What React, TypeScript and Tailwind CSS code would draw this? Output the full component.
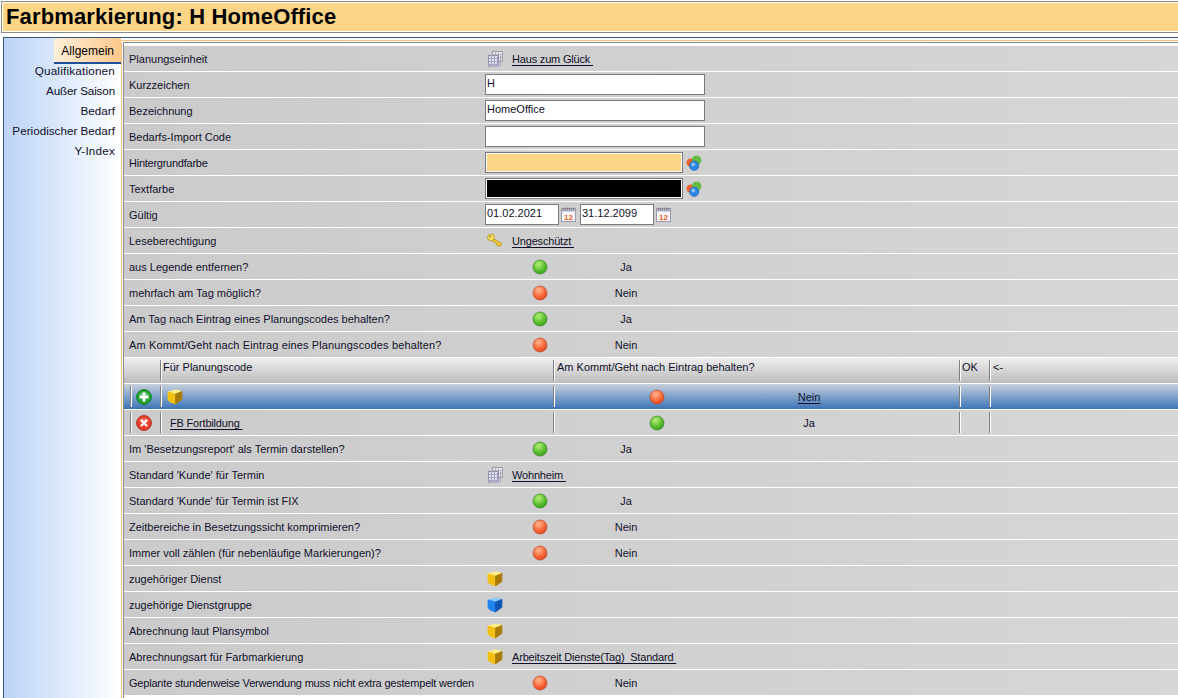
import React from 'react';

type Opt = 'Ja' | 'Nein';

function Ball({ color }: { color: 'green' | 'red' }) {
  const id = color === 'green' ? 'ball-green' : 'ball-red';
  const stops = color === 'green' ? ['#b8ee7a', '#5cc030', '#2f9418'] : ['#ffb890', '#fa6a3c', '#d83a18'];
  return (
    <svg width="16" height="16" viewBox="0 0 16 16" className="shrink-0">
      <defs>
        <radialGradient id={id} cx="0.4" cy="0.3" r="0.8">
          <stop offset="0" stopColor={stops[0]} />
          <stop offset="0.55" stopColor={stops[1]} />
          <stop offset="1" stopColor={stops[2]} />
        </radialGradient>
      </defs>
      <circle cx="8" cy="8" r="7" fill={`url(#${id})`} stroke={color === 'green' ? '#3c8a26' : '#c04a2a'} strokeWidth="0.7" />
    </svg>
  );
}

function Cube({ blue }: { blue?: boolean }) {
  const c = blue ? ['#86c8ff', '#1f82ee', '#0f55b4'] : ['#fff08a', '#f2c010', '#a87c04'];
  return (
    <svg width="16" height="16" viewBox="0 0 16 16" className="shrink-0" strokeLinejoin="round">
      <polygon points="1,3 9,0.8 15,2.4 8.5,5" fill={c[0]} stroke={c[0]} strokeWidth="0.8" />
      <polygon points="1,3 8.5,5 8.5,15 3,13 1,10.5" fill={c[1]} stroke={c[1]} strokeWidth="0.8" />
      <polygon points="8.5,5 15,2.4 14.8,10.5 8.5,15" fill={c[2]} stroke={c[2]} strokeWidth="0.8" />
    </svg>
  );
}

function GridIcon() {
  const lines = [0, 1, 2, 3];
  return (
    <svg width="16" height="16" viewBox="0 0 16 16" className="shrink-0" fill="none" strokeWidth="1">
      <rect x="5.5" y="0.5" width="10" height="10" fill="#e8e8ee" stroke="#9a9aa4" />
      <path d="M8.5 0.5v10M11.5 0.5v10M5.5 3.5h10M5.5 6.5h10" stroke="#b4b4c0" />
      <rect x="1.5" y="4.5" width="10" height="10.5" fill="#e2e2f6" stroke="#9090a8" />
      {lines.map((i) => (
        <path key={i} d={`M${4.5 + i * 3} 4.5v10.5M1.5 ${7.5 + i * 3}h10`} stroke="#a4a4c2" />
      ))}
    </svg>
  );
}

function KeyIcon() {
  return (
    <svg width="16" height="16" viewBox="0 0 16 16" className="shrink-0">
      <path d="M6 5.5l9 5.2-1.2 2.4-1.6-.9-1 1.3-1.4-1 .2-1.6L4.5 7.5z" fill="#eec62a" stroke="#a8881c" strokeWidth="0.6" />
      <circle cx="4" cy="4.4" r="3.4" fill="#f8e060" stroke="#b4901e" strokeWidth="0.8" />
      <circle cx="3.2" cy="3.6" r="1" fill="#9a8434" />
    </svg>
  );
}

function CalendarIcon() {
  return (
    <svg width="15" height="15" viewBox="0 0 15 15" className="shrink-0">
      <rect x="0.5" y="1.5" width="14" height="13" fill="#f6f6fa" stroke="#9a9aaa" />
      <rect x="1" y="2" width="13" height="2.5" fill="#b4b4c2" />
      <path d="M2.5 0.5v3M4.5 0.5v3M6.5 0.5v3M8.5 0.5v3M10.5 0.5v3M12.5 0.5v3" stroke="#77777f" strokeWidth="0.7" />
      <text x="7.5" y="12.6" fontSize="8" fontWeight="700" textAnchor="middle" fill="#ea5a1c" fontFamily="Liberation Sans, sans-serif">12</text>
    </svg>
  );
}

function ColorsIcon() {
  return (
    <svg width="16" height="16" viewBox="0 0 16 16" className="shrink-0">
      <circle cx="4.6" cy="7.6" r="4.2" fill="#f0602c" />
      <circle cx="10.6" cy="5.2" r="4.8" fill="#66bc44" />
      <circle cx="8.2" cy="10.8" r="4.7" fill="#2c84e4" stroke="#1f63b8" strokeWidth="0.6" />
      <circle cx="7.2" cy="9.6" r="2" fill="#86c0f6" />
    </svg>
  );
}

function RoundButton({ kind }: { kind: 'add' | 'del' }) {
  const add = kind === 'add';
  return (
    <svg width="16" height="16" viewBox="0 0 16 16" className="shrink-0">
      <circle cx="8" cy="8" r="7.4" fill={add ? '#23a534' : '#e8402c'} stroke={add ? '#17782a' : '#b02a1c'} strokeWidth="1" />
      <path d="M2.8 6.4a5.4 4.4 0 0 1 10.4 0z" fill="#ffffff" opacity="0.28" />
      {add ? (
        <path d="M8 3.6v8.8M3.6 8h8.8" stroke="#ffffff" strokeWidth="2.8" />
      ) : (
        <path d="M5 5l6 6M11 5l-6 6" stroke="#ffffff" strokeWidth="2.4" />
      )}
    </svg>
  );
}

function Sep() {
  return <div className="h-[21px] w-[2px] shrink-0 border-l border-r border-l-[#7f7f7f] border-r-white" />;
}

function LinkText({ children }: { children: string }) {
  return <span className="whitespace-pre -tracking-[0.18px] underline underline-offset-2">{children + ' '}</span>;
}

function Row({ label, tracking, children }: { label: string; tracking?: string; children?: React.ReactNode }) {
  return (
    <div className="flex h-[26px] shrink-0 items-center border-b border-white">
      <div className={`w-[361px] shrink-0 whitespace-nowrap pl-[5px] pt-[2px] ${tracking ?? ''}`}>{label}</div>
      {children}
    </div>
  );
}

function YesNo({ value }: { value: Opt }) {
  return (
    <div className="flex items-center">
      <div className="ml-[47px]">
        <Ball color={value === 'Ja' ? 'green' : 'red'} />
      </div>
      <div className="ml-[28px] w-[100px] pt-[2px] text-center">{value}</div>
    </div>
  );
}

function IconLink({ icon, text }: { icon: React.ReactNode; text: string }) {
  return (
    <div className="flex items-center pl-[2px]">
      {icon}
      <div className="ml-[9px] pt-[2px]">
        <LinkText>{text}</LinkText>
      </div>
    </div>
  );
}

function TextBox({ value, w = 'w-[220px]' }: { value?: string; w?: string }) {
  return (
    <div className={`flex h-[21px] items-center border border-[#7a7a7a] bg-white pb-[2px] pl-[1px] ${w}`}>{value}</div>
  );
}

function ColorBox({ fill }: { fill: string }) {
  return (
    <div className="flex items-center gap-[3px]">
      <div className="h-[21px] w-[198px] border border-[#7a7a7a] bg-white p-px">
        <div className={`h-full w-full ${fill}`} />
      </div>
      <ColorsIcon />
    </div>
  );
}

function SubRow({ kind, code, value }: { kind: 'add' | 'del'; code?: string; value: Opt }) {
  const add = kind === 'add';
  return (
    <div className={`flex h-[26px] shrink-0 items-center border-b border-white ${add ? 'bg-gradient-to-b from-[#c8d0dc] to-[#3a74b6]' : ''}`}>
      <div className="w-[6px] shrink-0" />
      <Sep />
      <div className="w-[28px] shrink-0 pl-[4px]">
        <RoundButton kind={kind} />
      </div>
      <Sep />
      <div className="flex w-[391px] shrink-0 items-center pl-[5px]">
        {add ? <Cube /> : <div className="pl-[3px] pt-[2px]"><LinkText>{code ?? ''}</LinkText></div>}
      </div>
      <Sep />
      <div className="flex w-[404px] shrink-0 items-center">
        <div className="ml-[94px]">
          <Ball color={value === 'Ja' ? 'green' : 'red'} />
        </div>
        <div className="ml-[109px] w-[70px] pt-[2px] text-center">
          {add ? <span className="underline underline-offset-2">{value}</span> : value}
        </div>
      </div>
      <Sep />
      <div className="w-[28px] shrink-0" />
      <Sep />
    </div>
  );
}

const tabs = [
  { label: 'Qualifikationen', track: 'tracking-[0.2px]' },
  { label: 'Außer Saison', track: '-tracking-[0.15px]' },
  { label: 'Bedarf', track: '' },
  { label: 'Periodischer Bedarf', track: '' },
  { label: 'Y-Index', track: 'tracking-[0.2px]' },
];

export default function App() {
  return (
    <div className="flex h-[698px] w-[1178px] flex-col overflow-hidden bg-white font-['Liberation_Sans',sans-serif] text-[11px] text-[#10102a]">
      <div className="ml-px mt-px h-[32px] w-[1190px] shrink-0 border border-[#8a8a8a] p-px">
        <div className="flex h-full items-center bg-[#fdd587] pl-[3px] text-[22px] font-bold leading-none tracking-[0.14px] text-black">
          Farbmarkierung: H HomeOffice
        </div>
      </div>

      <div className="ml-[3px] mt-[4px] flex min-h-0 flex-1 border-l border-t border-l-[#39557d] border-t-[#39557d]">
        <div className="w-[117px] shrink-0 bg-gradient-to-r from-[#bcd4f6] to-white text-[11.7px]">
          <div className="ml-[50px] flex h-[26px] items-center justify-end rounded-tl-[3px] border-b-2 border-b-[#1f4f9c] bg-gradient-to-r from-[#fdeed8] to-[#fcc98a] pr-[7px] pt-[2px] text-[12px] text-black">
            Allgemein
          </div>
          <div className="-mt-[3px] flex flex-col items-end pr-[6px]">
            {tabs.map((t) => (
              <div key={t.label} className={`flex h-[20px] items-center whitespace-nowrap ${t.track}`}>{t.label}</div>
            ))}
          </div>
        </div>

        <div className="flex min-w-0 flex-1 flex-col pt-[2px]">
          <div className="h-px shrink-0 bg-[#fbbf78]" />
          <div className="flex min-h-0 flex-1 pt-px">
            <div className="mr-px w-px shrink-0 bg-[#fbbf78]" />
            <div className="flex min-w-0 flex-1 flex-col border-l border-t border-[#8a8a8a] pt-[3px]">
              <div className="flex flex-col bg-gradient-to-r from-[#cbcbcb] to-[#d6d6d6]">
                <Row label="Planungseinheit"><IconLink icon={<GridIcon />} text="Haus zum Glück" /></Row>
                <Row label="Kurzzeichen"><TextBox value="H" /></Row>
                <Row label="Bezeichnung"><TextBox value="HomeOffice" /></Row>
                <Row label="Bedarfs-Import Code"><TextBox /></Row>
                <Row label="Hintergrundfarbe" tracking="-tracking-[0.25px]"><ColorBox fill="bg-[#fdd587]" /></Row>
                <Row label="Textfarbe"><ColorBox fill="bg-black" /></Row>
                <Row label="Gültig">
                  <div className="flex items-center">
                    <TextBox value="01.02.2021" w="w-[74px]" />
                    <div className="ml-[2px] mr-[4px]"><CalendarIcon /></div>
                    <TextBox value="31.12.2099" w="w-[74px]" />
                    <div className="ml-[2px]"><CalendarIcon /></div>
                  </div>
                </Row>
                <Row label="Leseberechtigung"><IconLink icon={<KeyIcon />} text="Ungeschützt" /></Row>
                <Row label="aus Legende entfernen?"><YesNo value="Ja" /></Row>
                <Row label="mehrfach am Tag möglich?"><YesNo value="Nein" /></Row>
                <Row label="Am Tag nach Eintrag eines Planungscodes behalten?"><YesNo value="Ja" /></Row>
                <Row label="Am Kommt/Geht nach Eintrag eines Planungscodes behalten?" tracking="tracking-[0.13px]"><YesNo value="Nein" /></Row>

                <div className="flex h-[26px] shrink-0 items-start border-b border-white bg-gradient-to-b from-[#eeeeee] to-[#bdbdbd] pt-[2px]">
                  <div className="w-[36px] shrink-0" />
                  <Sep />
                  <div className="-mt-px w-[391px] shrink-0 pl-[1px]">Für Planungscode</div>
                  <Sep />
                  <div className="-mt-px w-[404px] shrink-0 whitespace-nowrap pl-[2px]">Am Kommt/Geht nach Eintrag behalten?</div>
                  <Sep />
                  <div className="-mt-px w-[28px] shrink-0 pl-[1px]">OK</div>
                  <Sep />
                  <div className="-mt-px pl-[2px]">&lt;-</div>
                </div>
                <SubRow kind="add" value="Nein" />
                <SubRow kind="del" code="FB Fortbildung" value="Ja" />

                <Row label="Im 'Besetzungsreport' als Termin darstellen?"><YesNo value="Ja" /></Row>
                <Row label="Standard 'Kunde' für Termin"><IconLink icon={<GridIcon />} text="Wohnheim" /></Row>
                <Row label="Standard 'Kunde' für Termin ist FIX"><YesNo value="Ja" /></Row>
                <Row label="Zeitbereiche in Besetzungssicht komprimieren?"><YesNo value="Nein" /></Row>
                <Row label="Immer voll zählen (für nebenläufige Markierungen)?"><YesNo value="Nein" /></Row>
                <Row label="zugehöriger Dienst"><div className="pl-[2px]"><Cube /></div></Row>
                <Row label="zugehörige Dienstgruppe"><div className="pl-[2px]"><Cube blue /></div></Row>
                <Row label="Abrechnung laut Plansymbol"><div className="pl-[2px]"><Cube /></div></Row>
                <Row label="Abrechnungsart für Farbmarkierung"><IconLink icon={<Cube />} text="Arbeitszeit Dienste(Tag)  Standard" /></Row>
                <Row label="Geplante stundenweise Verwendung muss nicht extra gestempelt werden" tracking="-tracking-[0.2px]"><YesNo value="Nein" /></Row>
              </div>
            </div>
          </div>
        </div>
      </div>
    </div>
  );
}
